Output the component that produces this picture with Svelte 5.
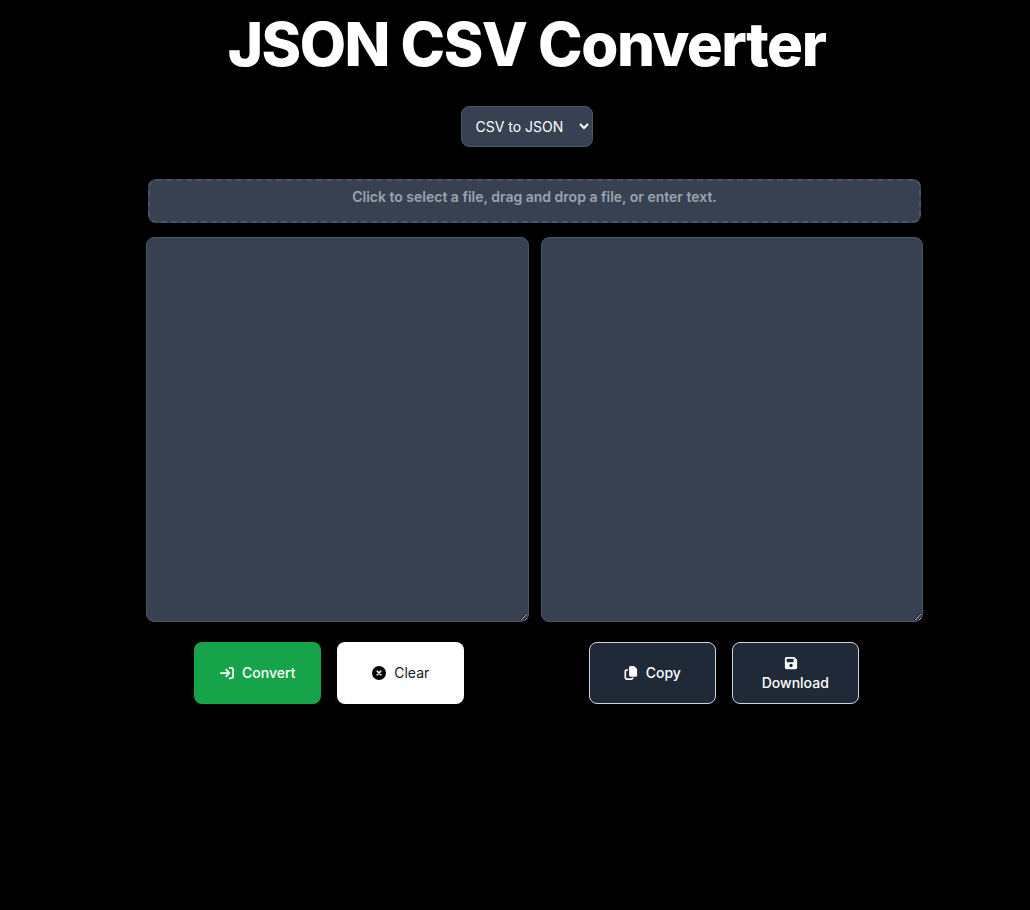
<script>
  let mode = $state('csv');
  let input = $state('');
  let output = $state('');

  function csvToJson(text) {
    const [head, ...rows] = text.trim().split('\n').map((line) => line.split(','));
    return JSON.stringify(rows.map((row) => Object.fromEntries(head.map((key, i) => [key, row[i] ?? '']))), null, 2);
  }

  function jsonToCsv(text) {
    const rows = JSON.parse(text);
    const keys = Object.keys(rows[0] ?? {});
    return [keys.join(','), ...rows.map((row) => keys.map((key) => row[key]).join(','))].join('\n');
  }

  function convert() {
    if (!input.trim()) return;
    try {
      output = mode === 'csv' ? csvToJson(input) : jsonToCsv(input);
    } catch (error) {
      output = error.message;
    }
  }

  function clear() {
    input = '';
    output = '';
  }

  function copy() {
    navigator.clipboard?.writeText(output);
  }

  function download() {
    const link = document.createElement('a');
    link.href = URL.createObjectURL(new Blob([output]));
    link.download = mode === 'csv' ? 'data.json' : 'data.csv';
    link.click();
  }

  async function readFile(file) {
    if (file) input = await file.text();
  }

  function drop(event) {
    event.preventDefault();
    readFile(event.dataTransfer.files[0]);
  }
</script>

<main>
  <header>
    <h1>JSON CSV Converter</h1>
    <select bind:value={mode} aria-label="Conversion">
      <option value="csv">CSV to JSON</option>
      <option value="json">JSON to CSV</option>
    </select>
  </header>

  <div class="work">
    <label class="drop" ondragover={(event) => event.preventDefault()} ondrop={drop}>
      Click to select a file, drag and drop a file, or enter text.
      <input type="file" onchange={(event) => readFile(event.currentTarget.files[0])} />
    </label>
    <div class="editors">
      <textarea bind:value={input} aria-label="Input"></textarea>
      <textarea bind:value={output} aria-label="Output"></textarea>
    </div>
  </div>

  <div class="actions">
    <div class="group">
      <button class="convert" onclick={convert}>
        <svg viewBox="0 0 16 16" fill="none" stroke="currentColor" stroke-width="2" stroke-linecap="round" stroke-linejoin="round">
          <path d="M1 8h9.600M7 4.200 10.800 8 7 11.800M11 2h1.500A2.500 2.500 0 0 1 15 4.500v7a2.500 2.500 0 0 1-2.500 2.500H11" />
        </svg>
        <span>Convert</span>
      </button>
      <button class="clear" onclick={clear}>
        <svg viewBox="0 0 16 16">
          <circle cx="8" cy="8" r="8" fill="#000" />
          <path d="m6 6 4 4m0-4-4 4" stroke="#fff" stroke-width="1.900" stroke-linecap="round" />
        </svg>
        <span>Clear</span>
      </button>
    </div>
    <div class="group">
      <button class="dark" onclick={copy}>
        <svg viewBox="0 0 16 16">
          <path d="M7.500 0h4L15 3.500v7a1.700 1.700 0 0 1-1.700 1.700H7.500a1.700 1.700 0 0 1-1.700-1.700V1.700A1.700 1.700 0 0 1 7.500 0Z" fill="currentColor" />
          <path d="M4.500 4.600H3a1.500 1.500 0 0 0-1.500 1.500v7.400A1.500 1.500 0 0 0 3 15h5.500a1.500 1.500 0 0 0 1.500-1.500v-.4" fill="none" stroke="currentColor" stroke-width="1.900" />
        </svg>
        <span>Copy</span>
      </button>
      <button class="dark stacked" onclick={download}>
        <svg viewBox="0 0 16 16">
          <path fill="currentColor" fill-rule="evenodd" d="M3 1h8.600L15 4.400V13a2 2 0 0 1-2 2H3a2 2 0 0 1-2-2V3a2 2 0 0 1 2-2Zm.7 2a.7.7 0 0 0-.7.7v2.600c0 .4.3.7.7.7h6.600c.4 0 .7-.3.7-.7V3.700a.7.7 0 0 0-.7-.7ZM8 8.800a2 2 0 1 0 0 4 2 2 0 0 0 0-4Z" />
        </svg>
        <span>Download</span>
      </button>
    </div>
  </div>
</main>

<style>
  :global(body) {
    margin: 0;
    background: #000;
  }

  main {
    box-sizing: border-box;
    max-width: 816px;
    margin: 0 auto;
    padding: 14px 0 0 25px;
    font-family: Inter, sans-serif;
    font-size: 14px;
    line-height: 20px;
    color: #fff;
  }

  header {
    display: flex;
    flex-direction: column;
    align-items: center;
    gap: 32px;
    padding-right: 2px;
  }

  h1 {
    margin: 0;
    font-size: 60px;
    line-height: 60px;
    font-weight: 800;
    letter-spacing: -0.025em;
    text-align: center;
  }

  select {
    height: 41px;
    padding: 0 0 0 10px;
    border: 1px solid #4b5563;
    border-radius: 8px;
    background: #374151;
    color: #fff;
    font: inherit;
    width: 132px;
  }

  .work {
    display: flex;
    flex-direction: column;
    gap: 14px;
    margin-top: 32px;
    padding-left: 14px;
  }

  .drop {
    height: 30px;
    margin: 0 2px;
    padding: 6px 10px 4px;
    border: 2px dashed #4b5563;
    border-radius: 8px;
    background: #374151;
    color: #9ca3af;
    font-weight: 600;
    text-align: center;
    cursor: pointer;
  }

  .drop input {
    display: none;
  }

  .editors {
    display: grid;
    grid-template-columns: 1fr 1fr;
    gap: 12px;
  }

  textarea {
    box-sizing: border-box;
    width: 100%;
    height: 385px;
    min-width: 0;
    padding: 10px;
    border: 1px solid #4b5563;
    border-radius: 8px;
    background: #374151;
    color: #fff;
    font: inherit;
  }

  .actions {
    display: grid;
    grid-template-columns: 1fr 1fr;
    margin-top: 20px;
    padding-right: 2px;
  }

  .group {
    display: flex;
    justify-content: center;
    gap: 16px;
  }

  button {
    display: flex;
    align-items: center;
    justify-content: center;
    gap: 8px;
    width: 127px;
    height: 62px;
    padding: 0;
    border: 1px solid transparent;
    border-radius: 8px;
    color: #fff;
    font: inherit;
    font-weight: 500;
    cursor: pointer;
  }

  svg {
    width: 14px;
    height: 14px;
  }

  .convert {
    background: #16a34a;
  }

  .clear {
    background: #fff;
    color: #111827;
    font-weight: 400;
  }

  .dark {
    border-color: #d1d5db;
    background: #1f2937;
  }

  .stacked {
    flex-direction: column;
    gap: 3px;
    padding-top: 2px;
  }

  .stacked svg {
    margin-right: 8px;
  }
</style>
